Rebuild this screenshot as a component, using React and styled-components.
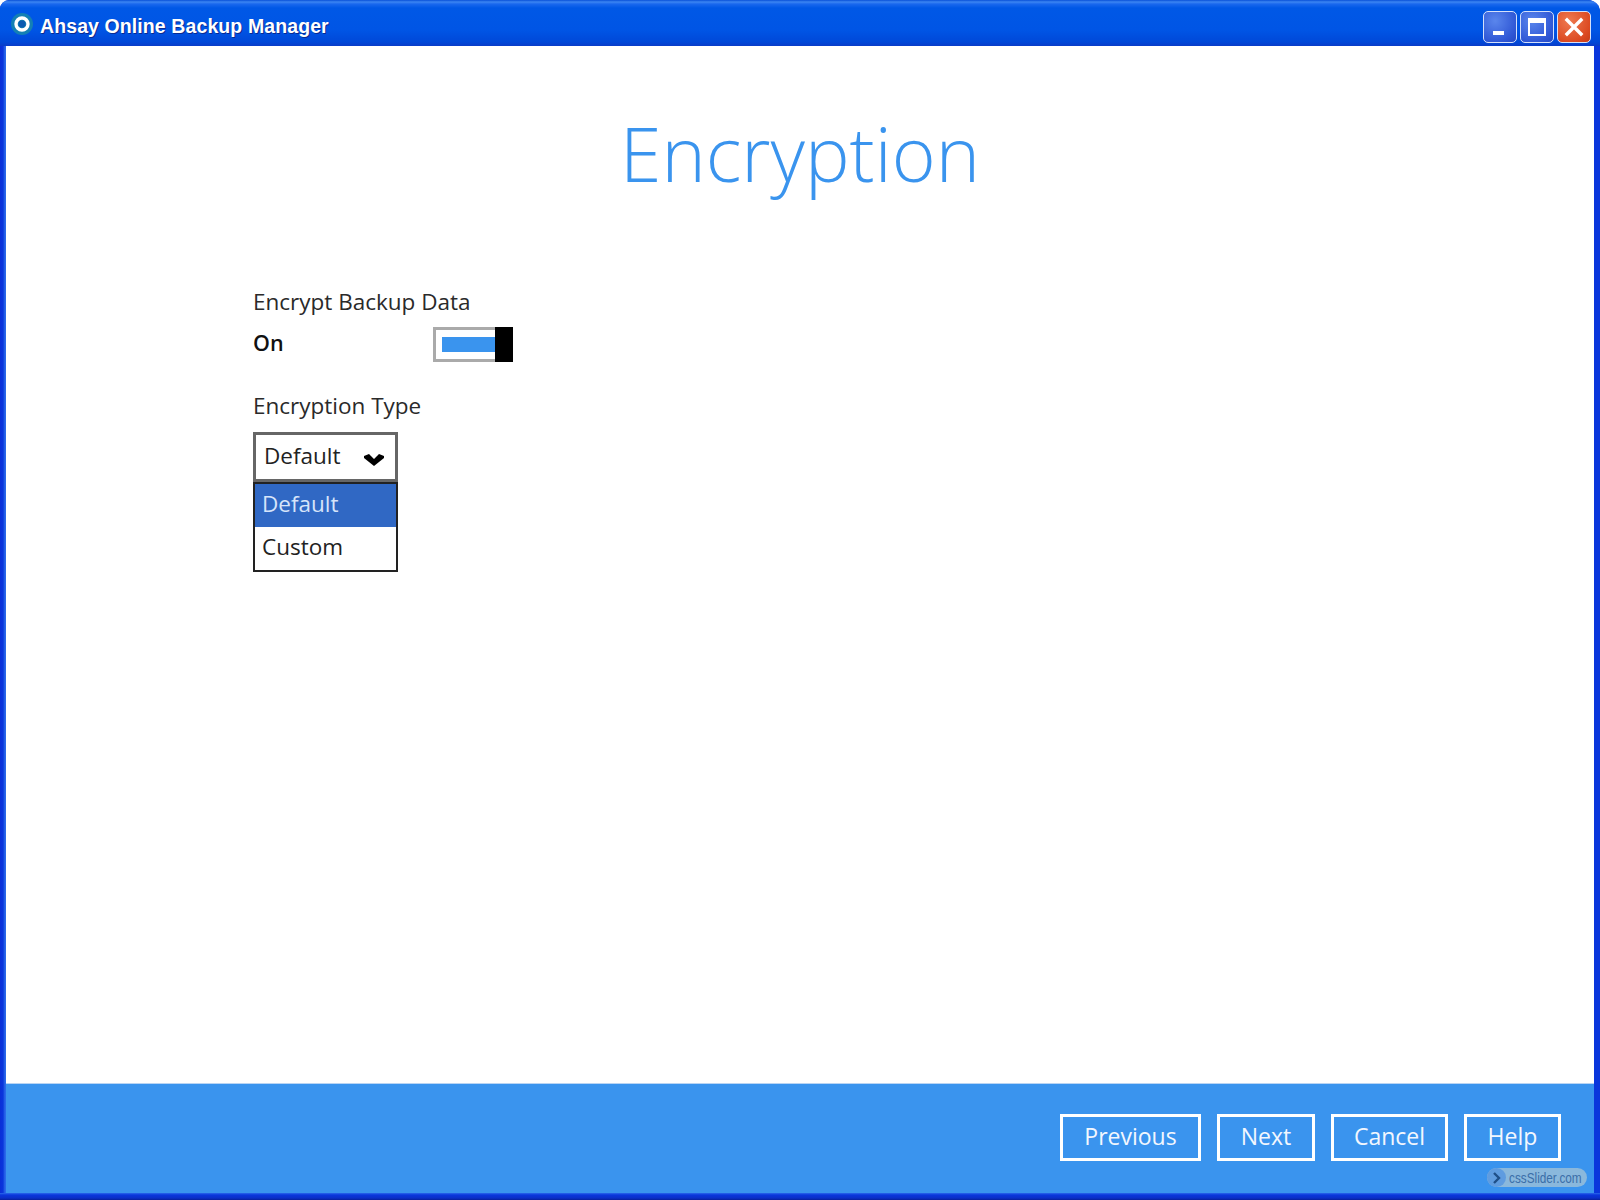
import React from 'react';
import styled, { createGlobalStyle } from 'styled-components';

const GlobalStyle = createGlobalStyle`
  html, body {
    margin: 0;
    padding: 0;
    background: #fff;
  }
  #root {
    width: 1600px;
    height: 1200px;
  }
`;

const Window = styled.div`
  position: relative;
  box-sizing: border-box;
  width: 1600px;
  height: 1200px;
  display: flex;
  flex-direction: column;
  overflow: hidden;
  border-radius: 9px 12px 0 0;
  background: linear-gradient(90deg, #0a2fd8 0, #0a36dc 3px, #2a68ea 5px, #2a68ea 6px, #0a36dc 6px);
  font-family: "Open Sans", "Liberation Sans", sans-serif;
`;

const TitleBar = styled.div`
  flex: none;
  height: 46px;
  display: flex;
  align-items: center;
  padding: 0 9px 0 11px;
  background: linear-gradient(
    180deg,
    #0850d8 0,
    #3c86f2 2px,
    #1a68ee 4px,
    #0058e6 8px,
    #0055e5 30px,
    #0048d8 42px,
    #0a3cc8 46px
  );
`;

const AppIcon = styled.svg`
  width: 22px;
  height: 22px;
  margin-right: 7px;
  margin-top: 2px;
`;

const WindowTitle = styled.div`
  flex: 1;
  margin-top: 6px;
  font-family: "Liberation Sans", sans-serif;
  font-weight: 700;
  font-size: 19.5px;
  letter-spacing: 0.1px;
  color: #fff;
  text-shadow: 1px 1px 0 #0a2a90;
`;

const Controls = styled.div`
  display: flex;
  gap: 3px;
  margin-top: 8px;
`;

const ControlButton = styled.button`
  box-sizing: border-box;
  width: 34px;
  height: 32px;
  padding: 0;
  display: flex;
  align-items: center;
  justify-content: center;
  border: 1.5px solid #d4e0fa;
  border-radius: 5px;
  background: ${p =>
    p.$close
      ? 'radial-gradient(circle at 35% 30%, #ef7a50, #dc4a22 70%, #c63c18)'
      : 'radial-gradient(circle at 35% 30%, #5a86ec, #3058d6 70%, #2448c4)'};
`;

const Body = styled.div`
  flex: 1;
  display: flex;
  flex-direction: column;
  margin: 0 6px;
  min-height: 0;
  background: #fff;
`;

const Content = styled.main`
  flex: 1;
  display: flex;
  flex-direction: column;
  padding: 0 247px;
`;

const Heading = styled.h1`
  margin: 55px 0 82px;
  text-align: center;
  font-weight: 300;
  font-size: 75px;
  line-height: 104px;
  color: #3a94ee;
`;

const FieldLabel = styled.div`
  font-size: 22.5px;
  line-height: 30px;
  color: #2a2a2a;
`;

const ToggleRow = styled.div`
  display: flex;
  align-items: center;
  width: 260px;
  height: 36px;
  margin: 9px 0 29px;
`;

const ToggleText = styled.div`
  width: 180px;
  margin-top: -4px;
  font-size: 21.5px;
  font-weight: 600;
  color: #111;
`;

const Toggle = styled.div`
  position: relative;
  box-sizing: border-box;
  width: 80px;
  height: 35px;
  padding: 7px 6px;
  border: 3px solid #aaa;
  background: #fff;
`;

const ToggleFill = styled.div`
  width: 53px;
  height: 15px;
  background: #3a94ee;
`;

const ToggleKnob = styled.div`
  position: absolute;
  top: -3px;
  right: -3px;
  width: 18px;
  height: 35px;
  background: #000;
`;

const SelectWrap = styled.div`
  position: relative;
  width: 145px;
  margin-top: 11px;
`;

const SelectBox = styled.div`
  box-sizing: border-box;
  height: 50px;
  display: flex;
  align-items: center;
  justify-content: space-between;
  padding: 0 11px 4px 8px;
  border: 3px solid #666;
  background: #fff;
  font-size: 22.5px;
  color: #222;
`;

const Chevron = styled.svg`
  width: 20px;
  height: 12px;
  margin-top: 10px;
`;

const Menu = styled.div`
  box-sizing: border-box;
  height: 90px;
  border: 2px solid #222;
  background: #fff;
`;

const MenuItem = styled.div`
  height: 43px;
  display: flex;
  align-items: center;
  padding: 0 0 4px 7px;
  box-sizing: border-box;
  font-size: 22.5px;
  color: ${p => (p.$selected ? '#d6e4fa' : '#222')};
  background: ${p => (p.$selected ? '#3068c4' : 'transparent')};
`;

const Footer = styled.footer`
  flex: none;
  box-sizing: border-box;
  height: 110px;
  display: flex;
  justify-content: flex-end;
  align-items: flex-start;
  gap: 16px;
  padding: 30px 33px 0 0;
  border-top: 1px solid #b8d4f4;
  background: #3a94ee;
`;

const FooterButton = styled.button`
  box-sizing: border-box;
  width: ${p => p.$w}px;
  height: 47px;
  padding: 0 0 3px;
  border: 3px solid #fff;
  background: transparent;
  font-family: "Open Sans", "Liberation Sans", sans-serif;
  font-weight: 500;
  font-size: 23px;
  color: #f2f7fe;
`;

const BottomEdge = styled.div`
  flex: none;
  height: 7px;
  background: linear-gradient(180deg, #2a68ea 0, #0a36dc 2px, #0a2fc8 5px, #08209a 7px);
`;

const Watermark = styled.div`
  position: absolute;
  right: 13px;
  bottom: 13px;
  width: 100px;
  height: 19px;
  display: flex;
  align-items: center;
  gap: 3px;
  border-radius: 10px;
  background: #8ab8dc;
  color: #3a6ea8;
`;

const WatermarkArrow = styled.span`
  flex: none;
  width: 19px;
  height: 19px;
  display: flex;
  align-items: center;
  justify-content: center;
  border-radius: 50%;
  background: #5f9ce0;
`;

const WatermarkText = styled.span`
  font-family: "Liberation Sans", sans-serif;
  font-size: 15.5px;
  white-space: nowrap;
  transform: scaleX(0.76);
  transform-origin: left center;
`;

const buttons = [
  { label: 'Previous', w: 141 },
  { label: 'Next', w: 98 },
  { label: 'Cancel', w: 117 },
  { label: 'Help', w: 97 },
];

export default function App() {
  return (
    <Window>
      <GlobalStyle />
      <TitleBar>
        <AppIcon viewBox="0 0 22 22">
          <circle cx="11" cy="11" r="11" fill="#1480b4" />
          <circle cx="11" cy="11" r="6" fill="none" stroke="#fff" strokeWidth="3.4" />
          <circle cx="11" cy="11" r="3.4" fill="#0a5ab0" />
        </AppIcon>
        <WindowTitle>Ahsay Online Backup Manager</WindowTitle>
        <Controls>
          <ControlButton aria-label="Minimize">
            <svg width="24" height="24" viewBox="0 0 24 24">
              <rect x="5" y="16" width="11" height="4" fill="#fff" />
            </svg>
          </ControlButton>
          <ControlButton aria-label="Maximize">
            <svg width="24" height="24" viewBox="0 0 24 24">
              <rect x="4" y="4" width="16" height="16" fill="none" stroke="#fff" strokeWidth="2" />
              <rect x="4" y="4" width="16" height="4" fill="#fff" />
            </svg>
          </ControlButton>
          <ControlButton $close aria-label="Close">
            <svg width="24" height="24" viewBox="0 0 24 24">
              <path d="M5 5 L19 19 M19 5 L5 19" stroke="#fff" strokeWidth="3.4" strokeLinecap="square" />
            </svg>
          </ControlButton>
        </Controls>
      </TitleBar>
      <Body>
        <Content>
          <Heading>Encryption</Heading>
          <FieldLabel>Encrypt Backup Data</FieldLabel>
          <ToggleRow>
            <ToggleText>On</ToggleText>
            <Toggle>
              <ToggleFill />
              <ToggleKnob />
            </Toggle>
          </ToggleRow>
          <FieldLabel>Encryption Type</FieldLabel>
          <SelectWrap>
            <SelectBox>
              Default
              <Chevron viewBox="0 0 20 12">
                <path d="M0 2 L5 0 L10 5 L15 0 L20 2 L20 4 L10 12 L0 4 Z" fill="#000" />
              </Chevron>
            </SelectBox>
            <Menu>
              <MenuItem $selected>Default</MenuItem>
              <MenuItem>Custom</MenuItem>
            </Menu>
          </SelectWrap>
        </Content>
        <Footer>
          {buttons.map(b => (
            <FooterButton key={b.label} $w={b.w}>
              {b.label}
            </FooterButton>
          ))}
        </Footer>
      </Body>
      <BottomEdge />
      <Watermark>
        <WatermarkArrow>
          <svg width="10" height="12" viewBox="0 0 10 12">
            <path d="M2 1 L7 6 L2 11" fill="none" stroke="#1f4f88" strokeWidth="2.4" />
          </svg>
        </WatermarkArrow>
        <WatermarkText>cssSlider.com</WatermarkText>
      </Watermark>
    </Window>
  );
}
